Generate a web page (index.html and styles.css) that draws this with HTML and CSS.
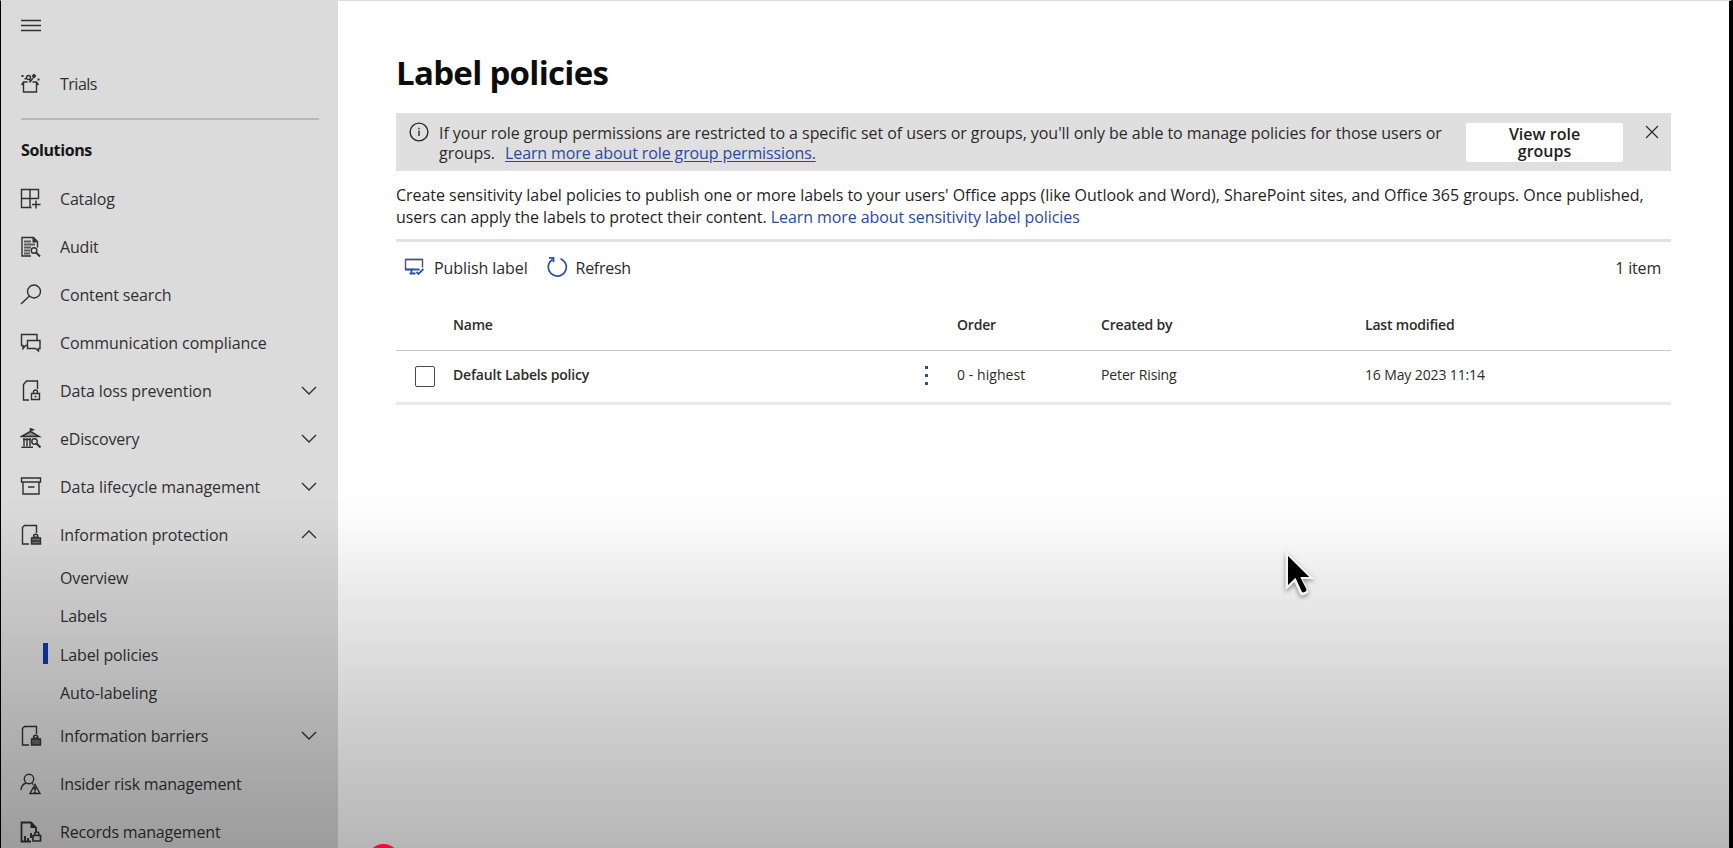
FILE: index.html
```
<!DOCTYPE html>
<html lang="en">
<head>
<meta charset="utf-8">
<title>Label policies</title>
<link rel="stylesheet" href="styles.css">
</head>
<body>
<div class="app">
  <nav class="sidebar">
    <button class="menu" aria-label="Menu"><svg class="icon" viewBox="0 0 22 22"><path d="M1 5.500h20M1 10.500h20M1 15.500h20"/></svg></button>
    <a class="item trials"><svg class="icon" viewBox="0 0 22 22"><path d="M3.500 9.500v9.500h13V9.500M1.500 12l2-3h4M12.500 9h4l2 3M10 9l3-4M11.500 6.500l-2.500 2.500"/><circle cx="8.500" cy="4.500" r="2"/><path class="solid" d="M14 .5l2.500 2.500-2.500 2.500-2.500-2.500zM1.500 2h2v2h-2zM17.500 5.500h2v2h-2zM4.500 5h1.500v1.500H4.500z"/></svg><span>Trials</span></a>
    <div class="divider"></div>
    <div class="section">Solutions</div>
    <a class="item"><svg class="icon" viewBox="0 0 22 22"><path d="M18.500 11V1.500h-17v18h10M1.500 10.500h17M10 1.500v18M16 12.500v8M12 16.500h8.500"/></svg><span>Catalog</span></a>
    <a class="item"><svg class="icon" viewBox="0 0 22 22"><path d="M11 20H2V1.500h11.500l4 4v6"/><path class="solid" d="M12.500 1v5.500h5z"/><path d="M4 5.500h7M4 8.500h11M4 11.500h7M4 14.500h6M4 17.500h6" stroke-width="2.200" opacity=".75"/><circle cx="14" cy="14.500" r="2.800"/><path d="M16 16.500l4 4" stroke-width="1.900"/></svg><span>Audit</span></a>
    <a class="item"><svg class="icon" viewBox="0 0 22 22"><circle cx="14" cy="7.500" r="6.500"/><path d="M9.400 12.100L1 20"/></svg><span class="wide search">Content search</span></a>
    <a class="item"><svg class="icon" viewBox="0 0 22 22"><path d="M7 13.500H5.500L3 16.500v-3H1.500v-11H17V8M7.500 8.500H20v8h-1.500V19l-3-2.500h-8z"/></svg><span class="wide">Communication compliance</span></a>
    <a class="item"><svg class="icon" viewBox="0 0 22 22"><path d="M9 20H3.500V4.500L6.500 1H17.500V9"/><path d="M11.500 13.500h8v6h-8zM13.500 13.500v-1.500a2 2 0 0 1 4 0v1.500M14.500 16.500h2"/></svg><span class="mid">Data loss prevention</span><svg class="chev" viewBox="0 0 16 16"><path d="M1 4l7 7 7-7"/></svg></a>
    <a class="item"><svg class="icon" viewBox="0 0 22 22"><path d="M1.500 8.500L10.500 3.500l8.500 5zM10.500 3.500V.8l2.500 1-2.500 1" stroke-width="1.600"/><path class="solid" opacity=".45" d="M3 8.500l7.500-4 7 4z"/><path d="M4 10v8M7 10v8M10 10v8" stroke-width="1.900" opacity=".75"/><path d="M1.500 19.200H13M3 11.500h8" stroke-width="1.600"/><circle cx="14.500" cy="13.500" r="2.700"/><path d="M16.500 15.500l4 4" stroke-width="1.900"/></svg><span>eDiscovery</span><svg class="chev" viewBox="0 0 16 16"><path d="M1 4l7 7 7-7"/></svg></a>
    <a class="item"><svg class="icon" viewBox="0 0 22 22"><path d="M1.500 2h19v4h-19zM3 6v12h16v-12M8 11h6.500"/></svg><span class="wide">Data lifecycle management</span><svg class="chev" viewBox="0 0 16 16"><path d="M1 4l7 7 7-7"/></svg></a>
    <a class="item"><svg class="icon" viewBox="0 0 22 22"><path d="M9 20H2.500V3.500l2-2H16.500V9"/><path d="M11.500 14h9v6h-9zM13.500 14V12.500a2.200 2.200 0 0 1 4.400 0V14M12 17h8"/><path class="solid" opacity=".6" d="M12 14h8v6h-8zM14 12h4v2h-4z"/></svg><span class="mid">Information protection</span><svg class="chev" viewBox="0 0 16 16"><path d="M1 11l7-7 7 7"/></svg></a>
    <div class="sub">
      <a class="subitem">Overview</a>
      <a class="subitem">Labels</a>
      <a class="subitem current">Label policies</a>
      <a class="subitem">Auto-labeling</a>
    </div>
    <a class="item"><svg class="icon" viewBox="0 0 22 22"><path d="M9 20H2.500V3.500l2-2H16.500V9"/><path d="M11.500 14h9v6h-9zM13.500 14V12.500a2.200 2.200 0 0 1 4.400 0V14"/><path class="solid" opacity=".7" d="M12 14h8v6h-8zM14 12h4v2h-4z"/></svg><span>Information barriers</span><svg class="chev" viewBox="0 0 16 16"><path d="M1 4l7 7 7-7"/></svg></a>
    <a class="item"><svg class="icon" viewBox="0 0 22 22"><circle cx="9" cy="6" r="4.700"/><path d="M1 17c.3-3.500 2-6 5-7M12 10.500l1.500 1"/><path d="M15 11.500l5 9H10z"/><path d="M15 14v3.500M15 18.500v1.500" stroke-width="2.200"/></svg><span>Insider risk management</span></a>
    <a class="item"><svg class="icon" viewBox="0 0 22 22"><path d="M11 20.500H1.500V1.500h9.500l5 5V11" stroke-width="1.800"/><path class="solid" d="M10.500 1.500v5.500h5.500z"/><path d="M5 15v5M8 17v3M11 12v5" stroke-width="1.900"/><path d="M13 14.500h7.500V20H13zM14.800 14.500v-1.500a2 2 0 0 1 4 0v1.500" stroke-width="1.700"/></svg><span>Records management</span></a>
  </nav>

  <main class="content">
    <h1>Label policies</h1>

    <div class="banner">
      <svg class="info" viewBox="0 0 20 20"><circle cx="10" cy="10" r="8.900"/><path d="M10 8.500v5.500M10 5.700v1.500"/></svg>
      <p class="banner-text">If your role group permissions are restricted to a specific set of users or groups, you'll only be able to manage policies for those users or<br>groups. <a class="underlined">Learn more about role group permissions.</a></p>
      <button class="roles">View role<br>groups</button>
      <svg class="close" viewBox="0 0 14 14"><path d="M1 1l12 12M13 1L1 13"/></svg>
    </div>

    <p class="intro">Create sensitivity label policies to publish one or more labels to your users' Office apps (like Outlook and Word), SharePoint sites, and Office 365 groups. Once published,<br><span class="tight">users can apply the labels to protect their content. <a>Learn more about sensitivity label policies</a></span></p>

    <div class="toolbar">
      <button class="command publish"><svg viewBox="0 0 20 18"><path d="M9.500 11.500H1.500V1.500h17v8" stroke="#3c5488"/><path d="M1.500 1.500h17" stroke="#555"/><path d="M7.500 11.500v4M5.500 15.500h6M12.500 14l2 2 5-5M1.500 11.500h14" stroke="#2f559f" stroke-width="1.800"/></svg><span>Publish label</span></button>
      <button class="command refresh"><svg viewBox="0 0 22 22"><path d="M6.500 3.500A9 9 0 1 0 14.500 2.700M3 1.800h4.500v4.500" stroke="#2c4fa0" stroke-width="1.700"/></svg><span>Refresh</span></button>
      <span class="count">1 item</span>
    </div>

    <div class="grid head">
      <span></span><span>Name</span><span></span><span>Order</span><span>Created by</span><span>Last modified</span>
    </div>
    <div class="grid row">
      <span class="check"></span><span class="name">Default Labels policy</span>
      <span class="more"><i></i><i></i><i></i></span>
      <span class="order">0 - highest</span><span>Peter Rising</span><span>16 May 2023 11:14</span>
    </div>
  </main>

  <div class="shade"></div>
  <svg class="cursor" viewBox="0 0 36 52"><path d="M4 3v39.500l9-8.500 5.200 11.500c1 2 2.800 2.400 4.500 1.500l2.800-1.400c1.400-.8 1.800-2.300 1-4L21 31h12z" fill="#f4f4f4"/><path d="M6.500 8v29l7.500-7.300L20 43c.8 1.500 1.600 1.700 2.800 1.100l1.200-.6c1.100-.6 1.300-1.500.6-2.900L18.700 29h9z" fill="#000"/></svg>
  <div class="scrubber"></div>
</div>
</body>
</html>
```
FILE: styles.css
```
* { box-sizing: border-box; }

body {
  margin: 0;
  background: #fff;
  font-family: "Open Sans", "Noto Sans", sans-serif;
  font-size: 16px;
  letter-spacing: -0.18px;
  color: #2b2b2b;
}

button {
  border: 0;
  padding: 0;
  background: none;
  font: inherit;
  letter-spacing: inherit;
  color: inherit;
}

svg {
  fill: none;
  stroke: currentColor;
  stroke-width: 1.4;
  flex: none;
}

.solid { fill: currentColor; stroke: none; }

.app {
  position: relative;
  display: flex;
  height: 848px;
  overflow: hidden;
  border-left: 1px solid #000;
  border-right: 4px solid #000;
  border-top: 1px solid #dcdcdc;
}

/* Navigation */
.sidebar {
  width: 337px;
  flex: none;
  background: #dbdbdb;
  color: #303030;
}

.menu {
  display: flex;
  height: 24px;
  margin: 13px 0 22px 19px;
  align-items: center;
}

.icon { width: 22px; height: 22px; }

.item {
  display: flex;
  align-items: center;
  height: 48px;
  padding: 0 20px 0 19px;
}

.item span { flex: 1; margin-left: 18px; }
.item .wide { letter-spacing: -0.06px; }
.item .mid { letter-spacing: -0.1px; }
.item .search { letter-spacing: -0.14px; }
.trials span { letter-spacing: -0.5px; }

.chev { width: 16px; height: 16px; margin: -1px 1px 0 0; }

.divider {
  height: 2px;
  margin: 10px 19px 0 20px;
  background: #b8b8b8;
}

.section {
  height: 55px;
  padding: 19px 0 0 20px;
  line-height: 22px;
  font-weight: 700;
  letter-spacing: -0.38px;
  color: #161616;
}

.sub { height: 153px; }

.subitem {
  display: flex;
  align-items: center;
  height: 38.25px;
  padding-left: 59px;
  position: relative;
  letter-spacing: -0.13px;
}

.current::before {
  content: "";
  position: absolute;
  left: 42px;
  top: 7px;
  width: 5px;
  height: 21px;
  background: #0f3a9e;
}

/* Page */
.content {
  flex: 1;
  padding: 48px 58px 0 58px;
}

h1 {
  margin: 0;
  height: 64px;
  font-size: 33px;
  line-height: 48px;
  letter-spacing: -0.7px;
  color: #0d0d0d;
}

.banner {
  display: flex;
  align-items: flex-start;
  height: 58px;
  padding: 10px 12px 0 13px;
  background: #dfdfdf;
}

.info { width: 20px; height: 20px; margin-top: -1px; }

.banner-text {
  flex: 1;
  margin: 0 0 0 10px;
  line-height: 20px;
  letter-spacing: -0.05px;
  white-space: nowrap;
}

.underlined {
  margin-left: 6px;
  letter-spacing: -0.12px;
  text-decoration: underline;
  text-underline-offset: 2px;
}

a.underlined, .intro a { color: #2c4a99; }

.roles {
  width: 157px;
  height: 39px;
  border-radius: 2px;
  background: #fff;
  line-height: 17px;
  font-weight: 600;
  letter-spacing: 0;
  color: #1e1e1e;
}

.close { width: 14px; height: 14px; margin: 2px 0 0 22px; stroke-width: 1.2; }

.intro {
  margin: 13px 0 0;
  height: 55px;
  line-height: 22px;
  letter-spacing: -0.041px;
  color: #1f1f1f;
  white-space: nowrap;
}

.tight { letter-spacing: -0.075px; }

.toolbar {
  display: flex;
  align-items: center;
  height: 60px;
  padding: 0 10px 6px 8px;
  border-top: 3px solid #e3e3e3;
}

.command { display: flex; align-items: center; }
.publish svg { width: 20px; height: 18px; margin: -2px 10px 0 0; }
.publish span { letter-spacing: -0.08px; }
.refresh { margin-left: 18px; }
.refresh svg { width: 22px; height: 22px; margin: -2px 8px 0 0; }
.refresh span { letter-spacing: -0.3px; }
.count { margin-left: auto; letter-spacing: -0.2px; }

.grid {
  display: grid;
  grid-template-columns: 57px 466px 38px 144px 264px 1fr;
  align-items: center;
  font-size: 14px;
  letter-spacing: -0.13px;
}

.head {
  height: 52px;
  border-bottom: 1px solid #cacaca;
  font-weight: 600;
  letter-spacing: -0.2px;
}

.row {
  height: 54px;
  padding-bottom: 4px;
  border-bottom: 3px solid #e9e9e9;
}

.name { font-weight: 600; letter-spacing: -0.18px; }
.order { letter-spacing: 0.06px; }

.check {
  width: 20px;
  height: 21px;
  margin: 3px 0 0 18.500px;
  border: 1.500px solid #4a4a4a;
  border-radius: 2px;
}

.more {
  display: flex;
  flex-direction: column;
  gap: 5px;
  padding: 2px 0 0 6px;
}

.more i { width: 3px; height: 3px; background: #3a4a80; }

/* Player overlay */
.shade {
  position: absolute;
  inset: 0;
  background: linear-gradient(to bottom,
    rgba(0, 0, 0, 0) 485px, rgba(0, 0, 0, 0.016) 520px,
    rgba(0, 0, 0, 0.07) 575px, rgba(0, 0, 0, 0.14) 662px,
    rgba(0, 0, 0, 0.225) 765px, rgba(0, 0, 0, 0.288) 848px);
}

.cursor {
  position: absolute;
  left: 1280px;
  top: 547px;
  width: 37px;
  height: 52px;
  stroke: none;
  filter: drop-shadow(0 2px 2px rgba(0, 0, 0, 0.4));
}

.scrubber {
  position: absolute;
  left: 366px;
  top: 843px;
  width: 33px;
  height: 33px;
  border-radius: 50%;
  background: #f5093c;
}
```
